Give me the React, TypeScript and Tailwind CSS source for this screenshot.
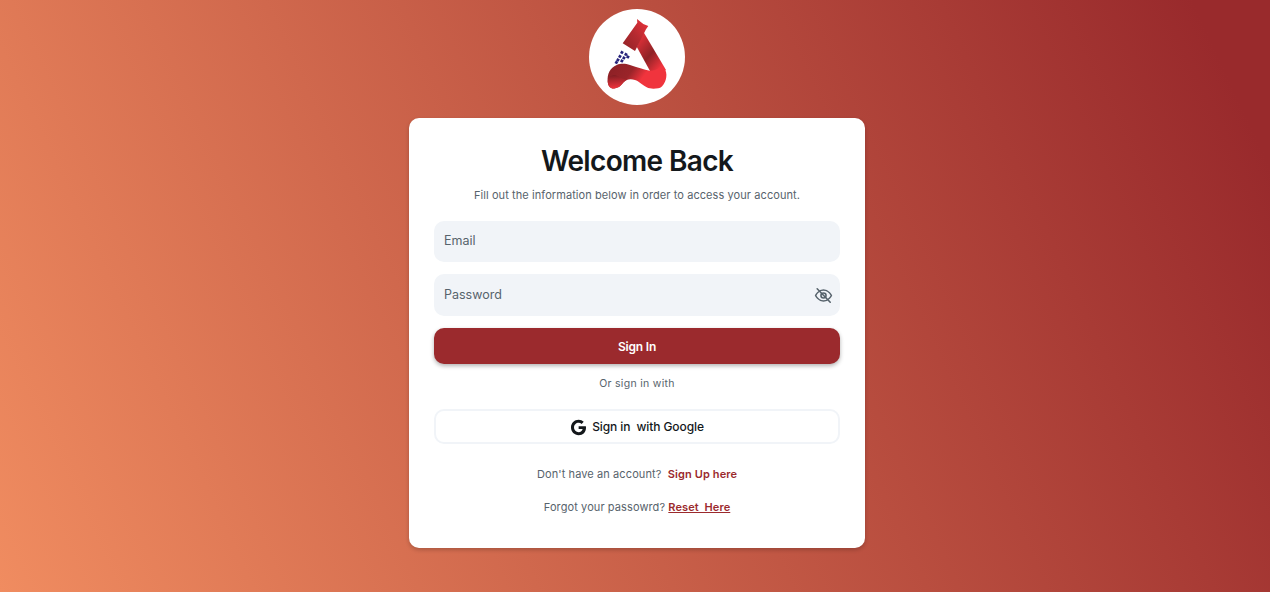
export default function App() {
  return (
    <div className="h-[592px] w-full overflow-hidden flex flex-col items-center bg-[linear-gradient(65deg,#f08c60_0%,#992a2c_95%)] font-['Inter',sans-serif] pt-[9px] pl-[4px]">
      <div className="w-[96px] h-[96px] rounded-full bg-white flex items-center justify-center">
        <svg width="96" height="96" viewBox="0 0 96 96">
          <defs>
            <linearGradient id="a" x1="0" y1="1" x2="1" y2="0">
              <stop offset="0" stopColor="#8f2226" />
              <stop offset="0.5" stopColor="#b52a30" />
              <stop offset="1" stopColor="#ee333c" />
            </linearGradient>
            <linearGradient id="b" x1="0.1" y1="0" x2="0.9" y2="1">
              <stop offset="0" stopColor="#ee333c" />
              <stop offset="0.5" stopColor="#8f2226" />
              <stop offset="0.85" stopColor="#ee333c" />
            </linearGradient>
            <linearGradient id="c" x1="0" y1="0" x2="1" y2="0.3">
              <stop offset="0" stopColor="#8a2025" />
              <stop offset="0.45" stopColor="#9a2429" />
              <stop offset="0.7" stopColor="#f0343d" />
              <stop offset="1" stopColor="#f0343d" />
            </linearGradient>
            <linearGradient id="d" x1="0.2" y1="0" x2="0.3" y2="1">
              <stop offset="0" stopColor="#7f1d22" />
              <stop offset="1" stopColor="#f0343d" />
            </linearGradient>
          </defs>
          <path d="M54.300 22.700 L77 61 L72 66 L61 62 L47.700 37.700 Z" fill="url(#b)" />
          <path d="M33.700 34.300 L48.300 13.700 L48 10 L54.300 15 L59.300 17 L57 20.300 L46 42 Z" fill="url(#a)" />
          <path d="M18.700 72.700 C18 65 21 59 27.700 56 C33 54 37 55 41 56 C48 58 55 61 61 61.700 C66 62 70 60 72.700 56 L77 62.700 C78 67 77 70 76 72.700 C74 77 72 79 69.300 79.300 C65 80 61 80 57.700 78.300 C53 76 50 72 46 71 C43 70 40 70 37.700 71 C34 73 32 77 29.300 78.300 C26 79.500 24 79.800 22.700 79.300 C20 78 19 76 18.700 72.700 Z" fill="url(#c)" />
          <path d="M18.700 72.700 C19 68 22 66 26 66 C28 66.500 32 69 37.700 71 C34 73 32 77 29.300 78.300 C26 79.500 24 79.800 22.700 79.300 C20 78 19 76 18.700 72.700 Z" fill="url(#d)" />
          <g fill="#27237a">
            <rect x="31.500" y="42" width="2.800" height="2.800" transform="rotate(30 32.900 43.400)" />
            <rect x="35.500" y="44" width="2.800" height="2.800" transform="rotate(30 36.900 45.400)" />
            <rect x="29.500" y="46" width="2.800" height="2.800" transform="rotate(30 30.900 47.400)" />
            <rect x="33.500" y="47.500" width="2.800" height="2.800" transform="rotate(30 34.900 48.900)" />
            <rect x="37.500" y="46.500" width="2.800" height="2.800" transform="rotate(30 38.900 47.900)" />
            <rect x="27.500" y="49.500" width="2.800" height="2.800" transform="rotate(30 28.900 50.900)" />
            <rect x="31.500" y="50.500" width="2.800" height="2.800" transform="rotate(30 32.900 51.900)" />
            <rect x="26" y="52" width="2.800" height="2.800" transform="rotate(30 27.400 53.400)" />
          </g>
        </svg>
      </div>
      <div className="mt-[13px] w-[456px] h-[430px] bg-white rounded-[10px] shadow-[0_2px_4px_rgba(0,0,0,0.2)] px-[25px] pt-[24px] flex flex-col">
        <h1 className="text-[28px] leading-[38px] font-semibold text-[#14181b] text-center tracking-[-0.65px]">Welcome Back</h1>
        <p className="mt-[7px] text-[11px] leading-[16px] tracking-[0.08px] text-[#57636c] text-center">Fill out the information below in order to access your account.</p>
        <div className="mt-[18px] h-[41px] rounded-[10px] bg-[#f1f4f8] flex items-center px-[10px] text-[12.5px] text-[#57636c]">Email</div>
        <div className="mt-[12px] h-[42px] rounded-[10px] bg-[#f1f4f8] flex items-center justify-between pl-[10px] pr-[7px] text-[12.5px] text-[#57636c]">
          <span>Password</span>
          <svg width="19" height="19" viewBox="0 0 24 24" fill="none" stroke="#57636c" strokeWidth="2" strokeLinecap="round" strokeLinejoin="round">
            <path d="M2 12s3.600-7 10-7 10 7 10 7-3.600 7-10 7-10-7-10-7Z" />
            <circle cx="12" cy="12" r="3.200" />
            <path d="M4 3.500 20.500 20.500" />
          </svg>
        </div>
        <button className="mt-[12px] h-[36px] pt-[1px] rounded-[10px] bg-[#9b2a2d] text-white text-[12px] font-semibold tracking-[-0.2px] shadow-[0_2px_4px_rgba(0,0,0,0.3)]">Sign In</button>
        <p className="mt-[12px] text-[10.5px] leading-[16px] tracking-[0.3px] text-[#57636c] text-center">Or sign in with</p>
        <button className="mt-[17px] h-[35px] pt-[1px] rounded-[10px] bg-white border-2 border-[#f1f4f8] flex items-center justify-center gap-[5px] text-[12px] font-medium text-[#14181b] tracking-[-0.1px]">
          <svg width="17" height="17" viewBox="0 0 24 24" fill="#14181b">
            <path d="M12.200 10.200v4h5.600c-.5 2.600-2.700 4.400-5.600 4.400-3.600 0-6.500-3-6.500-6.600s2.900-6.600 6.500-6.600c1.600 0 3 .6 4.200 1.600l3-3C17.400 2.200 15 1.200 12.200 1.200 6.200 1.200 1.400 6 1.400 12s4.800 10.800 10.800 10.800c6.200 0 10.400-4.400 10.400-10.600 0-.7-.1-1.400-.2-2Z" />
          </svg>
          <span className="whitespace-pre">Sign in  with Google</span>
        </button>
        <p className="mt-[22px] text-[11px] leading-[16px] tracking-[0.1px] text-[#57636c] text-center whitespace-pre">Don't have an account?  <span className="text-[#9b2a2d] font-semibold">Sign Up here</span></p>
        <p className="mt-[17px] text-[11px] leading-[16px] tracking-[0.1px] text-[#57636c] text-center whitespace-pre">Forgot your passowrd? <span className="text-[#9b2a2d] font-semibold underline">Reset  Here</span></p>
      </div>
    </div>
  );
}
